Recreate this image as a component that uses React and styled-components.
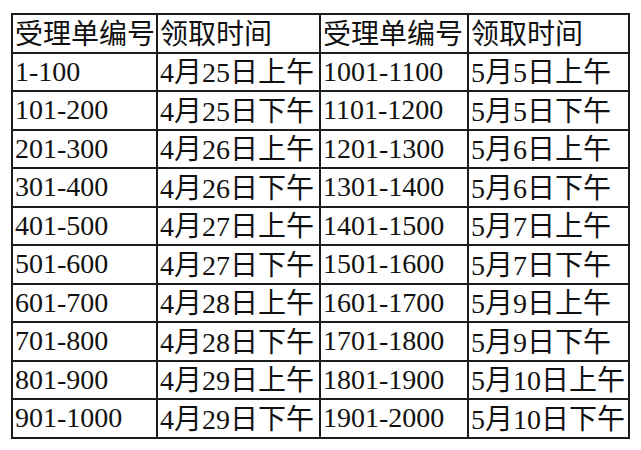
import React from 'react';
import styled, { createGlobalStyle } from 'styled-components';

const GlobalStyle = createGlobalStyle`
  html, body {
    margin: 0;
    padding: 0;
    background: #fff;
  }
`;

const rows = [
  ['1-100', '4月25日上午', '1001-1100', '5月5日上午'],
  ['101-200', '4月25日下午', '1101-1200', '5月5日下午'],
  ['201-300', '4月26日上午', '1201-1300', '5月6日上午'],
  ['301-400', '4月26日下午', '1301-1400', '5月6日下午'],
  ['401-500', '4月27日上午', '1401-1500', '5月7日上午'],
  ['501-600', '4月27日下午', '1501-1600', '5月7日下午'],
  ['601-700', '4月28日上午', '1601-1700', '5月9日上午'],
  ['701-800', '4月28日下午', '1701-1800', '5月9日下午'],
  ['801-900', '4月29日上午', '1801-1900', '5月10日上午'],
  ['901-1000', '4月29日下午', '1901-2000', '5月10日下午'],
];

const headers = ['受理单编号', '领取时间', '受理单编号', '领取时间'];
const widths = [145, 163, 148, 161];

// digits and dashes are set in a serif, the chinese in a sans
function Mixed({ text }) {
  const parts = text.match(/[0-9\-]+|[^0-9\-]+/g) || [];
  return parts.map((p, i) =>
    /[0-9]/.test(p) ? <Num key={i}>{p}</Num> : <Han key={i}>{p}</Han>
  );
}

function App() {
  return (
    <Page>
      <GlobalStyle />
      <Table>
        <colgroup>
          {widths.map((w, i) => (
            <col key={i} style={{ width: w }} />
          ))}
        </colgroup>
        <thead>
          <Row>
            {headers.map((h, i) => (
              <HeadCell key={i}>
                <Han>{h}</Han>
              </HeadCell>
            ))}
          </Row>
        </thead>
        <tbody>
          {rows.map((r, i) => (
            <Row key={i}>
              {r.map((c, j) => (
                <Cell key={j}>
                  <Mixed text={c} />
                </Cell>
              ))}
            </Row>
          ))}
        </tbody>
      </Table>
    </Page>
  );
}

const Page = styled.div`
  width: 641px;
  height: 450px;
  padding: 13px 0 0 11px;
  box-sizing: border-box;
  background: #fff;
`;

const Table = styled.table`
  border-collapse: collapse;
  table-layout: fixed;
  width: 619px;
  border: 2px solid #1c1c1c;
`;

const Row = styled.tr`
  height: 38.5px;
`;

const Cell = styled.td`
  border: 2px solid #1c1c1c;
  padding: 0 0 0 2px;
  font-size: 28px;
  line-height: 28px;
  color: #111;
  white-space: nowrap;
  vertical-align: middle;
  text-align: left;
  font-weight: 400;
`;

const HeadCell = styled(Cell).attrs({ as: 'th' })``;

const Num = styled.span`
  font-family: "Liberation Serif", serif;
`;

const Han = styled.span`
  font-family: "Noto Sans CJK SC", sans-serif;
  font-weight: 400;
`;

export default App;
